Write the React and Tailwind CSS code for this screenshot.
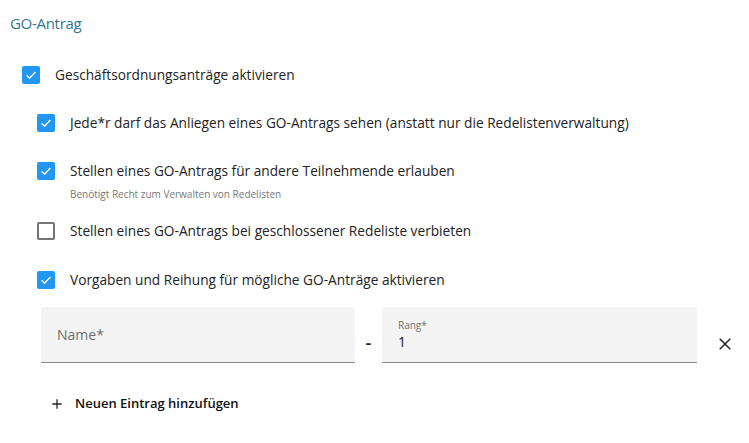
import React from "react";

const font = { fontFamily: '"Open Sans", "Noto Sans", sans-serif' };

function Box({ checked }) {
  if (checked) {
    return (
      <span className="w-[18px] h-[18px] rounded-[2px] bg-[#2196f3] flex items-center justify-center shrink-0">
        <svg width="14" height="14" viewBox="0 0 24 24" fill="none">
          <path d="M4.5 12.5l5 5L19.5 7" stroke="white" strokeWidth="2.4" />
        </svg>
      </span>
    );
  }
  return <span className="w-[18px] h-[18px] rounded-[2px] border-2 border-[#757575] shrink-0" />;
}

function Row({ checked, children, sub }) {
  return (
    <div className="flex flex-col">
      <div className="flex items-center h-[18px]">
        <Box checked={checked} />
        <span className="ml-[15px] text-[13.7px] text-[#222]">{children}</span>
      </div>
      {sub && <div className="ml-[33px] mt-[7px] text-[10px] text-[#777]">{sub}</div>}
    </div>
  );
}

export default function App() {
  return (
    <div className="w-[749px] h-[443px] bg-white relative" style={font}>
      <div className="pl-[10px] pt-[12px] text-[15px] text-[#2f7595] leading-[22px] tracking-[-0.3px]">GO-Antrag</div>
      <div className="pl-[22px] mt-[32px]">
        <Row checked>Geschäftsordnungsanträge aktivieren</Row>
      </div>
      <div className="pl-[37px] mt-[30px] flex flex-col">
        <Row checked>Jede*r darf das Anliegen eines GO-Antrags sehen (anstatt nur die Redelistenverwaltung)</Row>
        <div className="mt-[30px]">
          <Row checked sub="Benötigt Recht zum Verwalten von Redelisten">Stellen eines GO-Antrags für andere Teilnehmende erlauben</Row>
        </div>
        <div className="mt-[20px]">
          <Row>Stellen eines GO-Antrags bei geschlossener Redeliste verbieten</Row>
        </div>
        <div className="mt-[31px]">
          <Row checked>Vorgaben und Reihung für mögliche GO-Anträge aktivieren</Row>
        </div>
      </div>
      <div className="pl-[41px] mt-[18px] flex items-center">
        <div className="w-[314px] h-[56px] bg-[#f4f4f4] rounded-t-[4px] border-b border-[#8a8a8a] flex items-center px-[16px]">
          <span className="text-[14px] text-[#6e6e6e]">Name*</span>
        </div>
        <div className="w-[27px] flex justify-center pt-[14px] text-[18px] font-semibold text-[#222]">-</div>
        <div className="w-[315px] h-[56px] bg-[#f4f4f4] rounded-t-[4px] border-b border-[#8a8a8a] flex flex-col justify-center px-[16px]">
          <span className="text-[10px] text-[#6e6e6e] leading-[14px]">Rang*</span>
          <span className="text-[14px] text-[#222] leading-[20px]">1</span>
        </div>
        <div className="ml-[19px] mt-[18px]">
          <svg width="18" height="18" viewBox="0 0 24 24" fill="none">
            <path d="M5 5l14 14M19 5L5 19" stroke="#222" strokeWidth="2" />
          </svg>
        </div>
      </div>
      <div className="pl-[50px] mt-[31px] flex items-center">
        <svg width="14" height="14" viewBox="0 0 24 24" fill="none">
          <path d="M12 4v16M4 12h16" stroke="#222" strokeWidth="2.2" />
        </svg>
        <span className="ml-[11px] text-[13px] font-semibold text-[#111]">Neuen Eintrag hinzufügen</span>
      </div>
    </div>
  );
}
